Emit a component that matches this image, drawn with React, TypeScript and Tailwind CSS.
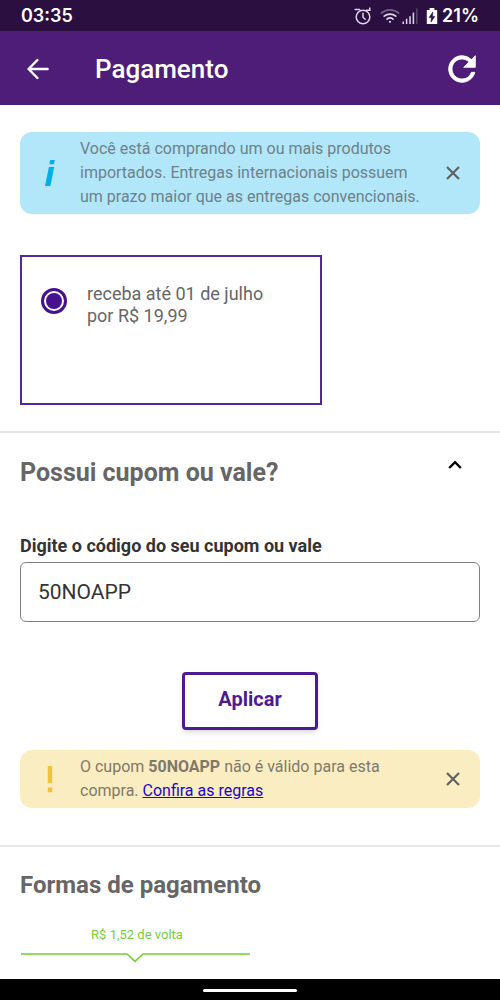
import { useState, type ReactNode } from 'react'

function AlarmIcon() {
  return (
    <svg width="18" height="18" viewBox="0 0 18 18" fill="none" stroke="#ded6e8" strokeWidth="1.5" strokeLinecap="round" aria-hidden>
      <circle cx="9" cy="10" r="6.8" />
      <path d="M9 6.2v4l2.2 2M1.2 2.6h4.4M12.6 3.2h3.2V1" />
    </svg>
  )
}

function WifiIcon() {
  return (
    <svg width="20" height="18" viewBox="0 0 20 18" fill="none" strokeWidth="1.7" strokeLinecap="round" aria-hidden>
      <path d="M1.4 6.2C6.2 1.8 13.8 1.8 18.6 6.2" stroke="#75618a" />
      <path d="M4.2 9.2C7.6 6.3 12.4 6.3 15.8 9.2" stroke="#ded6e8" />
      <path d="M7 12.2c1.9-1.6 4.1-1.6 6 0" stroke="#ded6e8" />
      <circle cx="10" cy="14.8" r="1.1" fill="#ded6e8" />
    </svg>
  )
}

function SignalIcon() {
  return (
    <svg width="16" height="18" viewBox="0 0 16 18" fill="none" stroke="#ded6e8" strokeWidth="1.5" aria-hidden>
      <path d="M1.2 17v-2.6M4.6 17v-5.2M8 17V9.2M11.4 17V5.4" />
      <path d="M14.8 17V1.4" stroke="#5d4870" />
    </svg>
  )
}

function BatteryIcon() {
  return (
    <svg width="12" height="18" viewBox="0 0 12 18" aria-hidden>
      <path d="M3.6 1h4.8v2h2.8v14H.8V3h2.8z" fill="#fff" />
      <path d="M6.8 5 3.2 10.6h2.2L5 15l3.8-5.6H6.5z" fill="#2a0f40" stroke="#2a0f40" strokeWidth=".6" />
    </svg>
  )
}

function StatusBar() {
  return (
    <div className="flex h-[31px] items-center bg-[#2a0f40] px-[21px] font-[Inter,sans-serif] text-lg leading-6 font-semibold text-white">
      <span className="flex-1">03:35</span>
      <div className="flex items-center">
        <AlarmIcon />
        <span className="ml-2">
          <WifiIcon />
        </span>
        <span className="ml-0.5">
          <SignalIcon />
        </span>
        <span className="mr-1 ml-2">
          <BatteryIcon />
        </span>
        <span>21%</span>
      </div>
    </div>
  )
}

function Header() {
  return (
    <header className="flex h-[74px] items-center bg-[#4e1d77] px-5 pt-0.5 text-white">
      <button type="button" aria-label="Voltar" className="flex size-9 items-center justify-center">
        <svg width="22" height="22" viewBox="0 0 22 22" fill="none" stroke="currentColor" strokeWidth="2.4" strokeLinecap="round" strokeLinejoin="round">
          <path d="M10.4 2 1.6 11l8.8 9M1.6 11h19" />
        </svg>
      </button>
      <h1 className="ml-[39px] flex-1 text-[26px] leading-8 font-medium">Pagamento</h1>
      <button type="button" aria-label="Atualizar" className="flex size-9 items-center justify-center">
        <svg className="shrink-0" width="40" height="40" viewBox="0 0 24 24" fill="currentColor" stroke="currentColor" strokeWidth=".5">
          <path d="M17.65 6.35A7.96 7.96 0 0 0 12 4c-4.42 0-7.99 3.58-7.99 8s3.57 8 7.99 8c3.73 0 6.84-2.55 7.73-6h-2.08A5.99 5.99 0 0 1 12 18c-3.31 0-6-2.69-6-6s2.69-6 6-6c1.66 0 3.14.69 4.22 1.78L13 11h7V4z" />
        </svg>
      </button>
    </header>
  )
}

type NoticeProps = {
  icon: ReactNode
  className: string
  children: ReactNode
}

function Notice({ icon, className, children }: NoticeProps) {
  const [open, setOpen] = useState(true)
  if (!open) return null

  return (
    <div className={`flex items-center rounded-xl py-[5px] pr-3.5 ${className}`}>
      <div className="flex w-[60px] shrink-0 justify-center">{icon}</div>
      <p className="flex-1 pr-4 text-base leading-6">{children}</p>
      <button
        type="button"
        aria-label="Fechar"
        onClick={() => setOpen(false)}
        className="flex size-[26px] shrink-0 items-center justify-center text-[#5f6360]"
      >
        <svg width="14" height="14" viewBox="0 0 14 14" stroke="currentColor" strokeWidth="2.2">
          <path d="m1 1 12 12M13 1 1 13" />
        </svg>
      </button>
    </div>
  )
}

function InfoIcon() {
  return (
    <svg width="12" height="28" viewBox="0 0 12 28" fill="#00aeea" aria-hidden>
      <path d="M6.2 1h4.6L10 5.2H5.4zM4.9 8h5.3L6.4 27H1z" />
    </svg>
  )
}

function AlertIcon() {
  return (
    <svg width="6" height="28" viewBox="0 0 6 28" fill="#f0c43a" aria-hidden>
      <path d="M.8 1h4.4v17H.8zM.8 22.6h4.4v4.6H.8z" />
    </svg>
  )
}

export default function App() {
  const [coupon, setCoupon] = useState('50NOAPP')
  const [expanded, setExpanded] = useState(true)

  return (
    <div className="flex min-h-screen flex-col bg-white font-[Roboto,sans-serif]">
      <StatusBar />
      <Header />

      <main className="flex-1">
        <section className="px-5 pt-[27px] pb-[26px]">
          <Notice icon={<InfoIcon />} className="bg-[#b2e7fa] text-[#6d8189]">
            Você está comprando um ou mais produtos importados. Entregas internacionais possuem um prazo maior que as
            entregas convencionais.
          </Notice>

          <label className="mt-[41px] flex min-h-[150px] w-[302px] items-start border-2 border-[#54279a] pt-[26px] pl-[19px] text-[#666]">
            <input
              type="radio"
              name="frete"
              defaultChecked
              className="mt-[5px] size-[26px] shrink-0 appearance-none rounded-full border-[3px] border-[#46108f] bg-[#46108f] bg-clip-content p-[2px]"
            />
            <span className="ml-5 text-lg leading-[22px]">
              receba até 01 de julho
              <br />
              por R$ 19,99
            </span>
          </label>
        </section>

        <section className="border-t-2 border-[#e6e6e6] px-5 pt-6 pb-[37px]">
          <div className="flex items-start justify-between">
            <h2 className="text-[25px] leading-8 font-bold text-[#666]">Possui cupom ou vale?</h2>
            <button
              type="button"
              aria-label="Recolher"
              aria-expanded={expanded}
              onClick={() => setExpanded(!expanded)}
              className="mr-3 flex h-4 w-[26px] items-center justify-center"
            >
              <svg width="14" height="10" viewBox="0 0 14 10" fill="none" stroke="#000" strokeWidth="2.4">
                <path d="m1.2 8 5.8-5.8L12.8 8" />
              </svg>
            </button>
          </div>

          {expanded && (
            <>
              <form className="mt-[45px]" onSubmit={(e) => e.preventDefault()}>
                <label htmlFor="coupon" className="block text-lg leading-6 font-bold text-[#333]">
                  Digite o código do seu cupom ou vale
                </label>
                <input
                  id="coupon"
                  type="text"
                  value={coupon}
                  onChange={(e) => setCoupon(e.target.value)}
                  className="mt-1 block h-[60px] w-full rounded-md border border-[#808080] px-[17px] text-[21px] text-[#333]"
                />
                <button
                  type="submit"
                  className="mx-auto mt-[50px] block h-[58px] w-[136px] rounded border-[3px] border-[#4f1a91] bg-white pb-1 text-xl font-bold text-[#4f1a91] shadow-md"
                >
                  Aplicar
                </button>
              </form>

              <div className="mt-5">
                <Notice icon={<AlertIcon />} className="bg-[#faedc1] text-[#80796a]">
                  O cupom <strong>50NOAPP</strong> não é válido para esta compra.{' '}
                  <a href="#regras" className="text-[#1c08c8] underline">
                    Confira as regras
                  </a>
                </Notice>
              </div>
            </>
          )}
        </section>

        <section className="border-t-2 border-[#e6e6e6] px-5 pt-[22px] pb-[15px]">
          <h2 className="text-2xl leading-8 font-bold text-[#666]">Formas de pagamento</h2>
          <div className="mt-6 w-[230px] text-center text-[#76cd36]">
            <p className="pl-1 text-[13px] leading-5">R$ 1,52 de volta</p>
            <svg className="mt-[7px] block" width="230" height="12" viewBox="0 0 230 12" fill="none" stroke="currentColor" strokeWidth="1.6" aria-hidden>
              <path d="M1 2h106l8 7.4L123 2h107" />
            </svg>
          </div>
        </section>
      </main>

      <footer className="flex h-[21px] items-center justify-center bg-black pt-0.5">
        <div className="h-[3px] w-[94px] rounded-full bg-white" />
      </footer>
    </div>
  )
}
